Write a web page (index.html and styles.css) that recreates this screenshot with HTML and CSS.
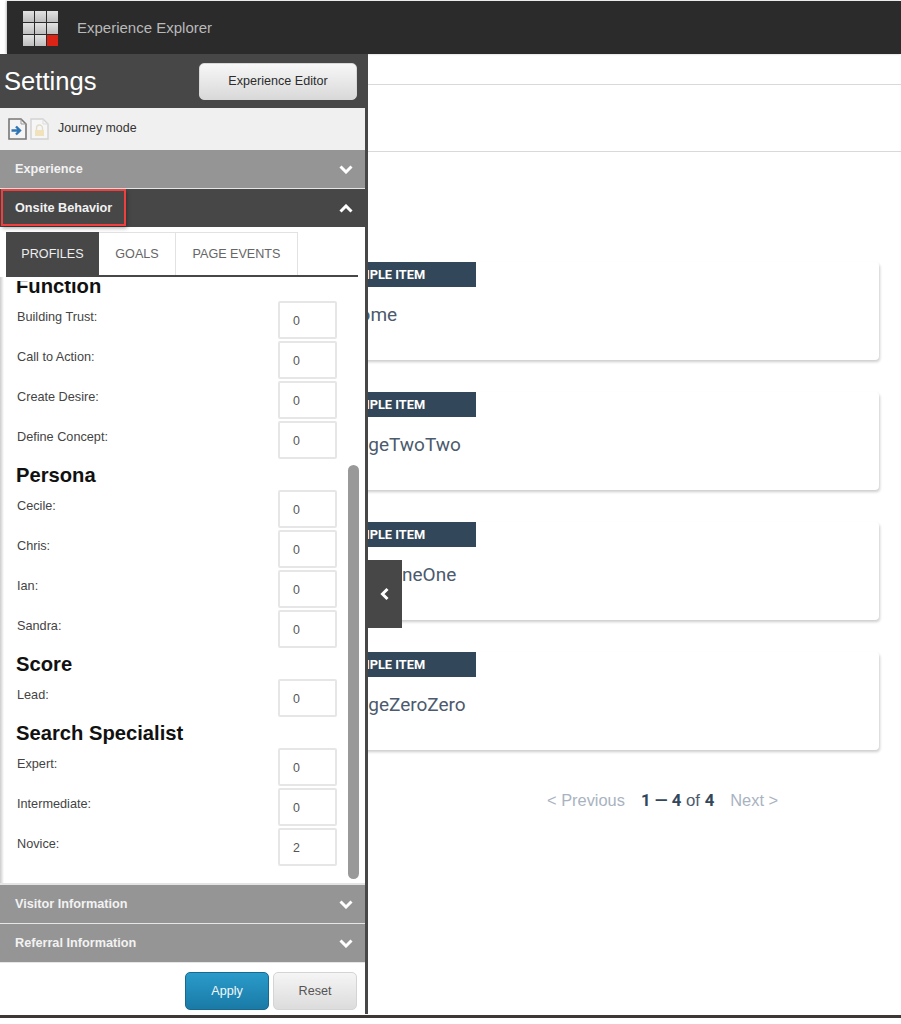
FILE: index.html
```html
<!DOCTYPE html>
<html lang="en">
<head>
    <meta charset="UTF-8">
    <meta name="viewport" content="width=device-width, initial-scale=1.0">
    <title>Experience Explorer</title>
    <link rel="stylesheet" href="styles.css">
</head>
<body>

    <!-- Top Bar -->
    <div class="top-bar">
        <div class="logo">
            <span></span><span></span><span></span>
            <span></span><span></span><span></span>
            <span></span><span></span><span class="red"></span>
        </div>
        <div class="app-title">Experience Explorer</div>
    </div>

    <!-- Page behind the panel -->
    <div class="main">
        <div class="sub-row"></div>
        <div class="sub-row tall"></div>
        <div class="list">
            <div class="card">
                <div class="badge">SAMPLE ITEM</div>
                <div class="card-title">Home</div>
            </div>
            <div class="card">
                <div class="badge">SAMPLE ITEM</div>
                <div class="card-title">PageTwoTwo</div>
            </div>
            <div class="card">
                <div class="badge">SAMPLE ITEM</div>
                <div class="card-title">PageOneOne</div>
            </div>
            <div class="card">
                <div class="badge">SAMPLE ITEM</div>
                <div class="card-title">PageZeroZero</div>
            </div>
            <div class="pager">
                <span class="pager-link">&lt; Previous</span>
                <span class="pager-count"><b>1 — 4</b> of <b>4</b></span>
                <span class="pager-link">Next &gt;</span>
            </div>
        </div>
    </div>
    <div class="bottom-line"></div>

    <!-- Settings panel, lies over the page -->
    <div class="panel">
        <div class="panel-head">
            <div class="panel-title">Settings</div>
            <button class="btn editor-btn">Experience Editor</button>
        </div>

        <div class="journey">
            <svg class="doc" width="19" height="22" viewBox="0 0 19 22">
                <path d="M1 1H13L18 6V21H1Z" fill="#f4f4f4" stroke="#777" stroke-width="1.6"/>
                <path d="M13 1V6H18" fill="none" stroke="#999"/>
                <path d="M3.5 12.5H11M8 8.5L12 12.5L8 16.5" fill="none" stroke="#2f76b5" stroke-width="2.4"/>
            </svg>
            <svg class="doc" width="19" height="22" viewBox="0 0 19 22">
                <path d="M1 1H13L18 6V21H1Z" fill="#f6f6f6" stroke="#d2d2d2" stroke-width="1.4"/>
                <path d="M13 1V6H18" fill="none" stroke="#dcdcdc"/>
                <path d="M6.5 12V10A3 3 0 0 1 12.5 10V12" fill="none" stroke="#e2dcc8" stroke-width="1.4"/>
                <rect x="5" y="12" width="9" height="6" fill="#f0e2bc"/>
            </svg>
            <span class="journey-label">Journey mode</span>
        </div>

        <div class="acc">
            <span>Experience</span>
            <svg class="chev" width="14" height="9" viewBox="0 0 14 9"><path d="M1.5 1.5L7 7L12.5 1.5" fill="none" stroke="#fff" stroke-width="3"/></svg>
        </div>
        <div class="acc open">
            <span>Onsite Behavior</span>
            <svg class="chev" width="14" height="9" viewBox="0 0 14 9"><path d="M1.5 7.5L7 2L12.5 7.5" fill="none" stroke="#fff" stroke-width="3"/></svg>
            <div class="highlight"></div>
        </div>

        <div class="tabs">
            <div class="tab active">PROFILES</div>
            <div class="tab goals">GOALS</div>
            <div class="tab events">PAGE EVENTS</div>
        </div>

        <div class="scroller">
            <div class="scroll-inner">
                <h3>Function</h3>
                <div class="row"><label>Building Trust:</label><input type="text" value="0"></div>
                <div class="row"><label>Call to Action:</label><input type="text" value="0"></div>
                <div class="row"><label>Create Desire:</label><input type="text" value="0"></div>
                <div class="row"><label>Define Concept:</label><input type="text" value="0"></div>
                <h3>Persona</h3>
                <div class="row"><label>Cecile:</label><input type="text" value="0"></div>
                <div class="row"><label>Chris:</label><input type="text" value="0"></div>
                <div class="row"><label>Ian:</label><input type="text" value="0"></div>
                <div class="row"><label>Sandra:</label><input type="text" value="0"></div>
                <h3>Score</h3>
                <div class="row"><label>Lead:</label><input type="text" value="0"></div>
                <h3>Search Specialist</h3>
                <div class="row"><label>Expert:</label><input type="text" value="0"></div>
                <div class="row"><label>Intermediate:</label><input type="text" value="0"></div>
                <div class="row"><label>Novice:</label><input type="text" value="2"></div>
            </div>
            <div class="scroll-thumb"></div>
        </div>

        <div class="acc">
            <span>Visitor Information</span>
            <svg class="chev" width="14" height="9" viewBox="0 0 14 9"><path d="M1.5 1.5L7 7L12.5 1.5" fill="none" stroke="#fff" stroke-width="3"/></svg>
        </div>
        <div class="acc">
            <span>Referral Information</span>
            <svg class="chev" width="14" height="9" viewBox="0 0 14 9"><path d="M1.5 1.5L7 7L12.5 1.5" fill="none" stroke="#fff" stroke-width="3"/></svg>
        </div>

        <div class="panel-foot">
            <button class="btn apply-btn">Apply</button>
            <button class="btn reset-btn">Reset</button>
        </div>

        <div class="collapse">
            <svg width="10" height="14" viewBox="0 0 10 14"><path d="M7.5 2L2.5 7L7.5 12" fill="none" stroke="#fff" stroke-width="3"/></svg>
        </div>
    </div>

</body>
</html>
```

FILE: styles.css
```css
/* Basic Reset */
* {
    margin: 0;
    padding: 0;
    box-sizing: border-box;
    font-family: "Liberation Sans", Arial, sans-serif;
}

body {
    position: relative;
    display: flex;
    flex-direction: column;
    height: 1024px;
    overflow: hidden;
    background-color: #fff;
}

/* Top Bar */
.top-bar {
    display: flex;
    align-items: center;
    height: 53px;
    margin-top: 1px;
    margin-left: 7px;
    padding-left: 16px;
    flex-shrink: 0;
    background-color: #2b2b2b;
    box-shadow: -1px 0 2px rgba(0, 0, 0, 0.25);
}

.logo {
    display: grid;
    grid-template-columns: repeat(3, 10.5px);
    grid-template-rows: repeat(3, 10.5px);
    gap: 1.5px;
    margin-top: 2px;
}

.logo span {
    background: linear-gradient(#e2e2e2, #bebebe);
}

.logo .red {
    background: #db2416;
}

.app-title {
    margin-left: 19.5px;
    margin-bottom: 1px;
    font-size: 15px;
    color: #b9b9b9;
}

/* Page behind the panel */
.main {
    flex: 1;
}

.sub-row {
    height: 31px;
    border-bottom: 1px solid #d9d9d9;
}

.sub-row.tall {
    height: 67px;
}

.list {
    display: flex;
    flex-direction: column;
    gap: 32px;
    padding: 110px 22px 0 325px;
}

.card {
    height: 98px;
    background-color: #fff;
    border-radius: 4px;
    box-shadow: 1px 2px 3px rgba(0, 0, 0, 0.2);
}

.badge {
    width: 151px;
    height: 25px;
    padding-left: 17px;
    font-family: Roboto, sans-serif;
    font-size: 12.8px;
    font-weight: bold;
    line-height: 25px;
    color: #fff;
    background-color: #33475b;
}

.card-title {
    margin-top: 16px;
    padding-left: 21px;
    font-family: Roboto, sans-serif;
    font-size: 19px;
    line-height: 24px;
    color: #4b5a6c;
}

.pager {
    display: flex;
    gap: 16px;
    margin-top: 6px;
    padding-left: 222px;
    font-family: Roboto, sans-serif;
    font-size: 16.4px;
    line-height: 24px;
}

.pager-link {
    color: #a9b3bf;
}

.pager-count {
    font-size: 16.8px;
    color: #4b5a6c;
}

.pager-count b {
    color: #33475b;
    font-family: Roboto, sans-serif;
}

.bottom-line {
    flex-shrink: 0;
    height: 3px;
    margin-bottom: 6px;
    background-color: #3d3735;
}

/* Settings panel */
.panel {
    position: absolute;
    top: 54px;
    left: 0;
    display: flex;
    flex-direction: column;
    width: 368px;
    height: 960px;
    background-color: #fff;
    border-right: 3px solid #474747;
}

.panel-head {
    display: flex;
    justify-content: space-between;
    align-items: center;
    height: 54px;
    padding: 0 8px 0 4px;
    flex-shrink: 0;
    background-color: #474747;
}

.panel-title {
    font-size: 25.6px;
    color: #fff;
}

.btn {
    border-radius: 5px;
    font-size: 12.6px;
    cursor: pointer;
}

.editor-btn {
    width: 158px;
    height: 37px;
    color: #2c2c2c;
    border: 1px solid #d8d8d8;
    background: linear-gradient(#f7f7f7, #d9d9d9);
}

.journey {
    display: flex;
    align-items: center;
    gap: 3px;
    height: 42px;
    padding-left: 8px;
    flex-shrink: 0;
    background-color: #f0f0f0;
}

.journey-label {
    margin-left: 6px;
    margin-bottom: 2px;
    font-size: 12.4px;
    color: #333;
}

.acc {
    position: relative;
    display: flex;
    justify-content: space-between;
    align-items: center;
    height: 39px;
    padding: 0 12px 0 15px;
    flex-shrink: 0;
    font-size: 12.7px;
    font-weight: bold;
    color: #f2f2f2;
    background-color: #959595;
    border-bottom: 1px solid #e6e6e6;
}

.acc.open {
    height: 38px;
    background-color: #474747;
    border-bottom: none;
}

.highlight {
    position: absolute;
    top: 0;
    left: 1px;
    width: 125px;
    height: 37px;
    border: 2px solid #ef3f3f;
    box-shadow: 1px 2px 4px rgba(0, 0, 0, 0.35);
}

/* Tabs */
.tabs {
    display: flex;
    height: 50px;
    margin: 0 7px 4px 6px;
    padding-top: 5px;
    flex-shrink: 0;
    border-bottom: 2px solid #474747;
}

.tab {
    display: flex;
    justify-content: center;
    align-items: center;
    font-size: 12.6px;
    color: #666;
    border: 1px solid #e2e2e2;
    border-bottom: none;
    border-left: none;
}

.tab.active {
    width: 93px;
    color: #eee;
    background-color: #474747;
    border: none;
}

.tab.goals {
    width: 77px;
}

.tab.events {
    width: 122px;
}

/* Scrolling list, the first heading sits partly above its top edge */
.scroller {
    position: relative;
    height: 604px;
    flex-shrink: 0;
    overflow: hidden;
    border-bottom: 2px solid #e4e4e4;
}

.panel::before {
    content: "";
    position: absolute;
    top: 223px;
    bottom: 131px;
    left: 0;
    width: 4px;
    background: linear-gradient(to right, #ccc, #fff);
}

.scroll-inner {
    margin-top: -9px;
    padding-left: 16px;
    padding-right: 28px;
}

.scroll-inner h3 {
    height: 29px;
    font-size: 20.2px;
    font-weight: bold;
    line-height: 29px;
    color: #111;
}

.row {
    display: flex;
    justify-content: space-between;
    height: 38px;
    margin-bottom: 2px;
}

.row label {
    margin-left: 1px;
    font-size: 12.7px;
    line-height: 33px;
    color: #444;
}

.row input {
    width: 59px;
    height: 38px;
    padding-top: 2px;
    padding-left: 13px;
    font-size: 12.4px;
    color: #555;
    border: 2px solid #e6e6e6;
    border-radius: 2px;
    outline: none;
}

.scroll-thumb {
    position: absolute;
    top: 184px;
    left: 348px;
    width: 11px;
    height: 414px;
    border-radius: 6px;
    background-color: #999;
}

.panel-foot {
    display: flex;
    justify-content: flex-end;
    gap: 4px;
    padding: 9px 8px 0 0;
}

.apply-btn,
.reset-btn {
    width: 84px;
    height: 38px;
}

.apply-btn {
    color: #f2f8fb;
    border: 1px solid #17698f;
    background: linear-gradient(#2a9bca, #1a7aa6);
}

.reset-btn {
    color: #555;
    border: 1px solid #d4d4d4;
    background: linear-gradient(#f5f5f5, #dcdcdc);
}

.collapse {
    position: absolute;
    top: 506px;
    left: 365px;
    display: flex;
    justify-content: center;
    align-items: center;
    width: 37px;
    height: 68px;
    padding-left: 3px;
    background-color: #474747;
}
```
